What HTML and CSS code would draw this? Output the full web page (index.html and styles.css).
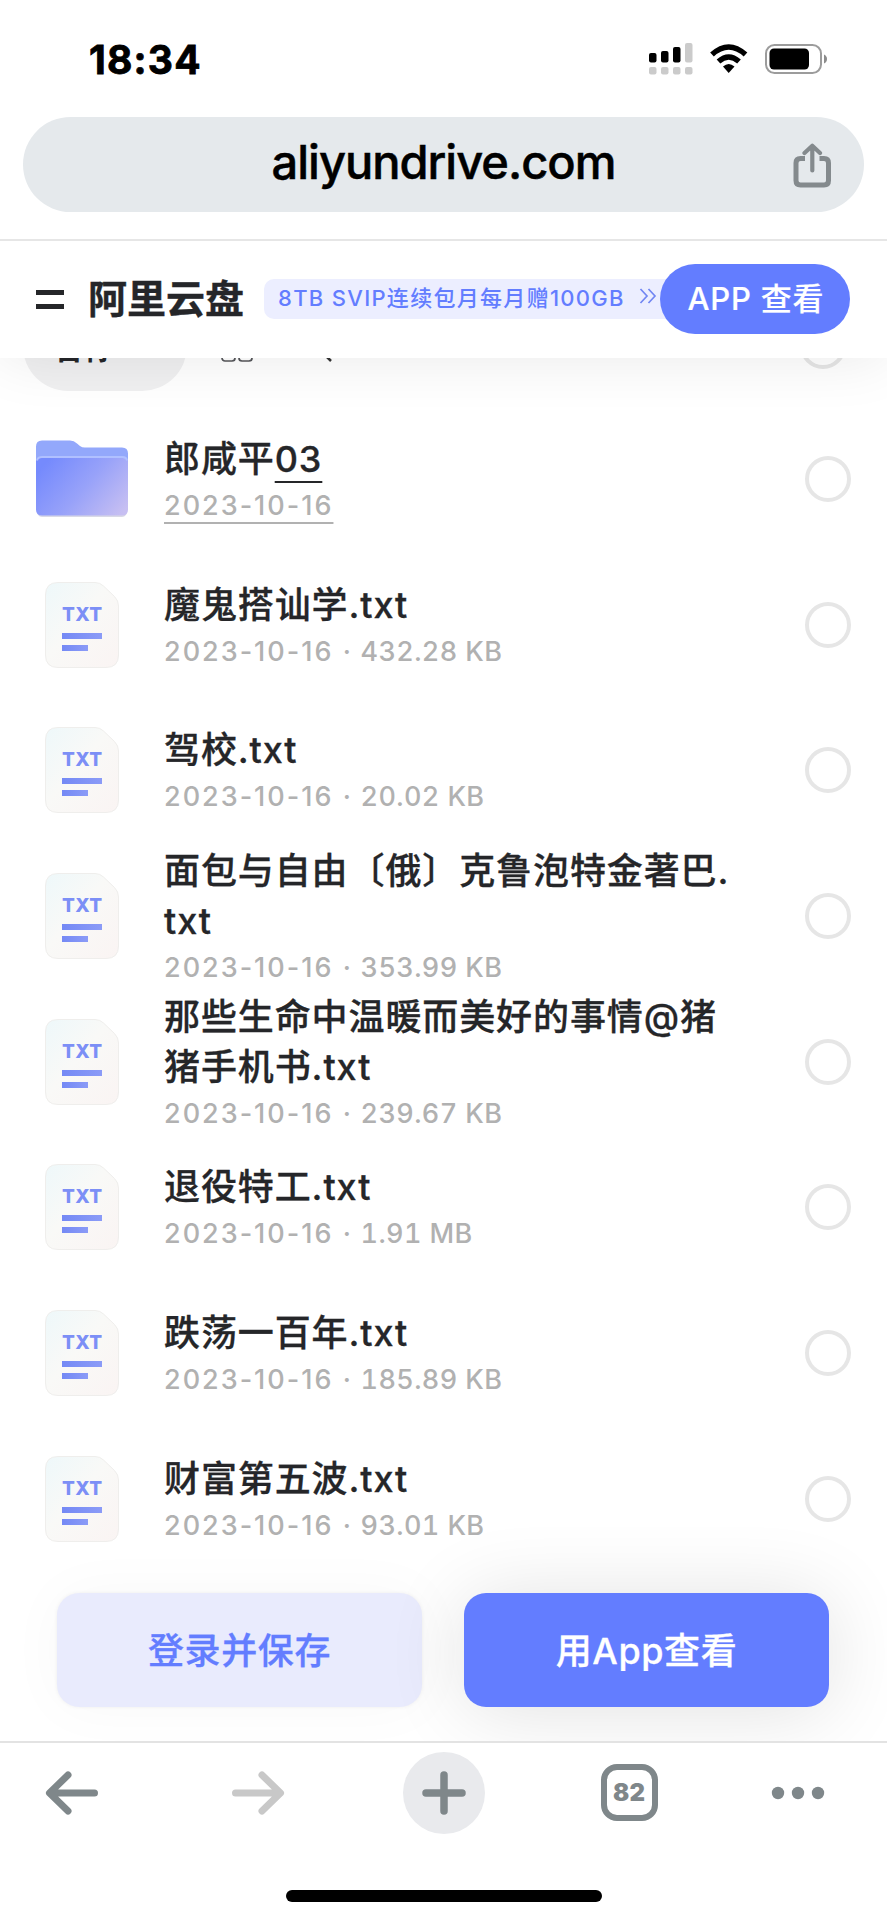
FILE: index.html
```html
<!doctype html>
<html lang="zh-CN">
  <head>
    <meta charset="utf-8">
    <meta name="viewport" content="width=device-width, initial-scale=1">

    <title>阿里云盘</title>
    <link rel="stylesheet" href="styles.css">
  </head>
  <body>
    <!-- Shared icons -->
    <svg class="sprite" width="0" height="0">
      <defs>
        <linearGradient id="paper" x1="0" y1="0" x2="1" y2="1">
          <stop offset="0" stop-color="#eef8fa"/>
          <stop offset=".45" stop-color="#f9f9f7"/>
          <stop offset="1" stop-color="#faf4f3"/>
        </linearGradient>
        <linearGradient id="ink" x1="0" y1="0" x2="1" y2="0">
          <stop offset="0" stop-color="#7489f5"/>
          <stop offset="1" stop-color="#8b9bf7"/>
        </linearGradient>
        <linearGradient id="folder" x1="0" y1=".3" x2="1" y2=".85">
          <stop offset="0" stop-color="#758afd"/>
          <stop offset=".5" stop-color="#98a2f9"/>
          <stop offset="1" stop-color="#c7bff2"/>
        </linearGradient>
      </defs>
      <symbol id="icon-txt" viewBox="0 0 74 86">
        <path d="M13 .5H50Q55 .5 58.500 4L69.500 14.500Q73.500 18.500 73.500 24V73Q73.500 85.500 61 85.500H13Q.5 85.500 .5 73V13Q.5 .5 13 .5Z" fill="url(#paper)" stroke="#efeeec"/>
        <text x="17" y="39" textLength="40" class="txt-label">TXT</text>
        <rect x="17" y="51" width="40" height="6" fill="url(#ink)"/>
        <rect x="17" y="63" width="26" height="6" fill="url(#ink)"/>
      </symbol>
    </svg>

    <div class="status-bar">
      <span class="clock">18:34</span>
      <svg class="status-icons" width="182" height="34" viewBox="0 0 182 34">
        <g fill="#000">
          <rect x="1" y="10" width="7.500" height="9.500" rx="2"/>
          <rect x="13" y="8" width="7.500" height="11.500" rx="2"/>
          <rect x="25" y="4" width="7.500" height="15.500" rx="2"/>
        </g>
        <g fill="#cbcbcb">
          <rect x="37" y="0" width="7.500" height="19.500" rx="2"/>
          <rect x="1" y="24" width="7.500" height="7.500" rx="2"/>
          <rect x="13" y="24" width="7.500" height="7.500" rx="2"/>
          <rect x="25" y="24" width="7.500" height="7.500" rx="2"/>
          <rect x="37" y="24" width="7.500" height="7.500" rx="2"/>
        </g>
        <g fill="none" stroke="#000" stroke-width="5.500">
          <path d="M64 11.500Q80.700 -3.500 97.500 11.500"/>
          <path d="M70.500 18.500Q80.700 9.500 91 18.500"/>
        </g>
        <path d="M75 23.500Q80.700 18.500 86.500 23.500L80.700 30Z"/>
        <rect x="118" y="2" width="55" height="28" rx="8.500" fill="none" stroke="#9c9c9c" stroke-width="2"/>
        <rect x="121.500" y="5.500" width="39.500" height="21" rx="4.500"/>
        <path d="M176 11.500Q179 13 179 16T176 20.500Z" fill="#8c8c8c"/>
      </svg>
    </div>

    <div class="address-row">
      <div class="address">
        <span class="host">aliyundrive.com</span>
        <svg class="share" width="40" height="46" viewBox="0 0 40 46" fill="none" stroke="#848a8d" stroke-width="5">
          <path d="M13 15.500H8.500Q4 15.500 4 20V37.500Q4 42 8.500 42H32Q36.500 42 36.500 37.500V20Q36.500 15.500 32 15.500H27.500"/>
          <path d="M20.300 27.500V4M12.500 10L20.300 2.800L28 10" stroke-width="4.200" stroke-linecap="round" stroke-linejoin="round"/>
        </svg>
      </div>
    </div>

    <div class="page">
      <header class="site-header">
        <div class="menu"><i></i><i></i></div>
        <h1 class="brand">阿里云盘</h1>
        <div class="promo">
          <span class="promo-text">8TB SVIP连续包月每月赠100GB</span>
          <svg width="18" height="16" viewBox="0 0 18 16" fill="none" stroke="#7186f3" stroke-width="1.700">
            <path d="M1.500 1L8 8L1.500 15M9.500 1L16 8L9.500 15"/>
          </svg>
        </div>
        <a class="open-app">APP 查看</a>
      </header>

      <div class="filter-bar">
        <span class="sort">名称</span>
        <svg class="grid-icon" width="32" height="32" viewBox="0 0 32 32" fill="none" stroke="#55565a" stroke-width="1.700">
          <rect x="1" y="1" width="13" height="13" rx="3"/>
          <rect x="18" y="1" width="13" height="13" rx="3"/>
          <rect x="1" y="18" width="13" height="13" rx="3"/>
          <rect x="18" y="18" width="13" height="13" rx="3"/>
        </svg>
        <svg class="search-icon" width="32" height="32" viewBox="0 0 32 32" fill="none" stroke="#333" stroke-width="2.500">
          <circle cx="14" cy="14" r="12"/>
          <path d="M22.500 22.500L31 31"/>
        </svg>
        <i class="check"></i>
      </div>

      <ul class="files">
        <li class="file">
          <svg class="file-icon" width="92" height="80" viewBox="-.5 -.5 93 80">
            <path d="M0 7Q0 1 6 1H34Q38 1 41 4L44 6.500Q46 8 49 8H86Q92 8 92 14V40H0Z" fill="#93a8fb"/>
            <path d="M1 23Q1 18 6 18H86Q91 18 91 23V71Q91 77.500 86 77.500H6Q1 77.500 1 71Z" fill="#d9d9e6"/>
            <path d="M0 22Q0 17 5 17H87Q92 17 92 22V70Q92 76 86 76H6Q0 76 0 70Z" fill="url(#folder)"/>
            <path d="M1 21Q1.500 17.500 6 17.500H86Q90.500 17.500 91 21" fill="none" stroke="#b0c0ff" stroke-width="2"/>
          </svg>
          <div class="info">
            <div class="name">郎咸平<span class="marked">03</span></div>
            <div class="meta"><span class="date marked">2023-10-16</span></div>
          </div>
          <i class="check"></i>
        </li>
        <li class="file">
          <svg class="file-icon" width="74" height="86"><use href="#icon-txt"/></svg>
          <div class="info">
            <div class="name">魔鬼搭讪学.txt</div>
            <div class="meta"><span class="date">2023-10-16 ·</span> 432.28 KB</div>
          </div>
          <i class="check"></i>
        </li>
        <li class="file">
          <svg class="file-icon" width="74" height="86"><use href="#icon-txt"/></svg>
          <div class="info">
            <div class="name">驾校.txt</div>
            <div class="meta"><span class="date">2023-10-16 ·</span> 20.02 KB</div>
          </div>
          <i class="check"></i>
        </li>
        <li class="file">
          <svg class="file-icon" width="74" height="86"><use href="#icon-txt"/></svg>
          <div class="info">
            <div class="name">面包与自由〔俄〕克鲁泡特金著巴.<br>txt</div>
            <div class="meta"><span class="date">2023-10-16 ·</span> 353.99 KB</div>
          </div>
          <i class="check"></i>
        </li>
        <li class="file">
          <svg class="file-icon" width="74" height="86"><use href="#icon-txt"/></svg>
          <div class="info">
            <div class="name">那些生命中温暖而美好的事情@猪<br>猪手机书.txt</div>
            <div class="meta"><span class="date">2023-10-16 ·</span> 239.67 KB</div>
          </div>
          <i class="check"></i>
        </li>
        <li class="file">
          <svg class="file-icon" width="74" height="86"><use href="#icon-txt"/></svg>
          <div class="info">
            <div class="name">退役特工.txt</div>
            <div class="meta"><span class="date">2023-10-16 ·</span> 1.91 MB</div>
          </div>
          <i class="check"></i>
        </li>
        <li class="file">
          <svg class="file-icon" width="74" height="86"><use href="#icon-txt"/></svg>
          <div class="info">
            <div class="name">跌荡一百年.txt</div>
            <div class="meta"><span class="date">2023-10-16 ·</span> 185.89 KB</div>
          </div>
          <i class="check"></i>
        </li>
        <li class="file">
          <svg class="file-icon" width="74" height="86"><use href="#icon-txt"/></svg>
          <div class="info">
            <div class="name">财富第五波.txt</div>
            <div class="meta"><span class="date">2023-10-16 ·</span> 93.01 KB</div>
          </div>
          <i class="check"></i>
        </li>
      </ul>

      <div class="actions">
        <a class="btn btn-light">登录并保存</a>
        <a class="btn btn-primary">用App查看</a>
      </div>
    </div>

    <nav class="browser-bar">
      <svg width="54" height="48" viewBox="0 0 54 48" fill="none" stroke="#7f878a" stroke-width="7" stroke-linecap="round" stroke-linejoin="round">
        <path d="M49.500 24H5M23 6L4.500 24L23 42"/>
      </svg>
      <svg width="54" height="48" viewBox="0 0 54 48" fill="none" stroke="#c8c8c8" stroke-width="7" stroke-linecap="round" stroke-linejoin="round">
        <path d="M4.500 24H49M31 6L49.500 24L31 42"/>
      </svg>
      <span class="new-tab">
        <svg width="44" height="44" viewBox="0 0 44 44" stroke="#7f878a" stroke-width="7.500" stroke-linecap="round">
          <path d="M22 4V40M4 22H40"/>
        </svg>
      </span>
      <span class="tab-count">82</span>
      <svg width="54" height="14" viewBox="0 0 54 14" fill="#7f878a">
        <circle cx="7" cy="7" r="6.200"/>
        <circle cx="27" cy="7" r="6.200"/>
        <circle cx="47" cy="7" r="6.200"/>
      </svg>
    </nav>
    <div class="home-area"><div class="home-indicator"></div></div>
  </body>
</html>
```

FILE: styles.css
```css
* {
     box-sizing: border-box;
}
body {
     margin: 0;
     width: 887px;
     height: 1920px;
     overflow: hidden;
     background: #fff;
     color: #252629;
     font-family: Inter, "Noto Sans CJK SC", sans-serif;
}
i {
     display: block;
}
svg {
     display: block;
     flex: none;
}
.sprite {
     position: absolute;
}

/* phone status bar */
.status-bar {
     position: relative;
     z-index: 3;
     display: flex;
     justify-content: space-between;
     align-items: center;
     height: 117px;
     padding: 2px 53px 0 89px;
     background: #fff;
}
.clock {
     font-size: 39px;
     font-weight: 700;
     letter-spacing: 1.200px;
     color: #000;
     -webkit-text-stroke: .8px;
}
.status-icons {
     margin-right: 4px;
}

/* browser address bar */
.address-row {
     position: relative;
     z-index: 3;
     height: 124px;
     padding: 0 23px;
     background: #fff;
     border-bottom: 2px solid #e6e6e6;
}
.address {
     display: flex;
     align-items: center;
     justify-content: center;
     height: 95px;
     padding-left: 71px;
     border-radius: 48px;
     background: #e5e9ec;
}
.host {
     flex: 1;
     text-align: center;
     font-size: 47px;
     font-weight: 500;
     line-height: 88px;
     letter-spacing: -1px;
     color: #000;
     margin: -5px -2px 0 0;
     -webkit-text-stroke: .5px;
}
.share {
     margin: 3px 32px 0 1px;
}

/* page */
.page {
     height: 1500px;
     display: flex;
     flex-direction: column;
}
.site-header {
     position: relative;
     z-index: 2;
     display: flex;
     align-items: center;
     flex: none;
     height: 117px;
     padding: 0 37px 0 36px;
     background: #fff;
     box-shadow: 0 0 60px rgba(0, 0, 0, .09);
}
.menu {
     display: flex;
     flex-direction: column;
     gap: 9px;
     width: 28px;
}
.menu i {
     height: 5px;
     background: #252629;
}
.brand {
     margin: -2px 0 0 24px;
     font-size: 39px;
     font-weight: 700;
     line-height: 56px;
     white-space: nowrap;
     -webkit-text-stroke: .4px;
}
.promo {
     display: flex;
     align-items: center;
     justify-content: space-between;
     flex: none;
     width: 420px;
     height: 40px;
     margin: -2px -24px 0 20px;
     padding: 0 27px 5px 14px;
     border-radius: 10px;
     background: #eceeff;
     color: #637dff;
}
.promo-text {
     font-size: 22px;
     font-weight: 500;
     letter-spacing: 1.300px;
     white-space: nowrap;
}
.open-app {
     position: relative;
     flex: none;
     width: 190px;
     height: 70px;
     margin-top: -2px;
     padding-left: 2px;
     border-radius: 35px;
     background: #637dff;
     color: #fff;
     font-size: 31px;
     font-weight: 500;
     line-height: 70px;
     letter-spacing: .8px;
     text-align: center;
     -webkit-text-stroke: .2px;
}

/* partly scrolled under the header */
.filter-bar {
     display: flex;
     align-items: center;
     flex: none;
     height: 90px;
     margin: -57px 41px 15px 23px;
}
.sort {
     width: 164px;
     height: 90px;
     padding-left: 29px;
     border-radius: 45px;
     background: #f0f0f1;
     font-size: 31px;
     font-weight: 700;
     line-height: 93px;
}
.grid-icon {
     margin-left: 34px;
}
.search-icon {
     margin-left: 47px;
}
.filter-bar .check {
     margin-left: auto;
}
.check {
     flex: none;
     width: 46px;
     height: 46px;
     border: 4px solid #e6e6e6;
     border-radius: 50%;
}

.files {
     margin: 0;
     padding: 0;
     list-style: none;
}
.file {
     display: flex;
     align-items: center;
     height: 145.700px;
     padding-right: 36px;
}
.file-icon {
     width: 164px;
}
.info {
     flex: 1;
     padding-top: 3px;
     white-space: nowrap;
}
.name {
     font-size: 36px;
     font-weight: 500;
     line-height: 50px;
     letter-spacing: .9px;
     -webkit-text-stroke: .3px;
}
.meta {
     font-size: 27px;
     font-weight: 500;
     line-height: 43px;
     letter-spacing: .4px;
     color: #b1b1b1;
     font-variant-numeric: tabular-nums;
}
.date {
     letter-spacing: 2px;
     font-variant-numeric: normal;
}
.marked {
     text-decoration: underline;
     text-decoration-thickness: 2px;
     text-decoration-skip-ink: none;
     text-underline-offset: 9px;
}
.date.marked {
     text-underline-offset: 7px;
}
.txt-label {
     font-size: 19px;
     font-weight: 800;
     fill: #7c8ff6;
}

.actions {
     display: flex;
     justify-content: space-between;
     margin: 21px 58px 0 57px;
}
.btn {
     width: 365px;
     height: 114px;
     border-radius: 22px;
     font-size: 36px;
     font-weight: 500;
     line-height: 116px;
     letter-spacing: .6px;
     text-align: center;
     -webkit-text-stroke: .3px;
}
.btn-light {
     background: #e9ebfd;
     color: #637dff;
     box-shadow: 0 0 4px rgba(0, 0, 0, .06), 0 0 60px rgba(0, 0, 0, .03);
}
.btn-primary {
     background: #637dff;
     color: #fff;
     box-shadow: 0 4px 80px rgba(0, 0, 0, .12);
}

/* browser bottom toolbar */
.browser-bar {
     position: relative;
     z-index: 3;
     display: grid;
     grid-template-columns: 144px 228px 143px 228px 109px;
     align-items: center;
     justify-items: center;
     height: 102px;
     padding-bottom: 1px;
     background: #fff;
     border-top: 2px solid #e3e3e3;
}
.new-tab {
     display: flex;
     align-items: center;
     justify-content: center;
     width: 82px;
     height: 82px;
     border-radius: 50%;
     background: #e9eaed;
}
.tab-count {
     width: 57px;
     height: 57px;
     border: 6px solid #7f878a;
     border-radius: 16px;
     color: #7f878a;
     font-size: 24px;
     font-weight: 900;
     line-height: 45px;
     text-align: center;
}
.home-area {
     position: relative;
     z-index: 3;
     height: 77px;
     padding-top: 47px;
     background: #fff;
}
.home-indicator {
     width: 316px;
     height: 12px;
     margin: 0 auto;
     border-radius: 6px;
     background: #000;
}
```
